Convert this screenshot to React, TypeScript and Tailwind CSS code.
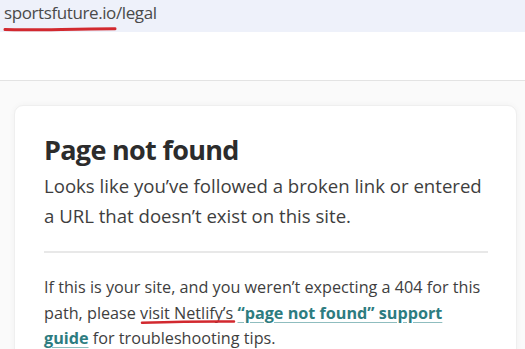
import React from "react";

export default function App() {
  const font = { fontFamily: '"Open Sans", "Noto Sans", sans-serif' };
  return (
    <div className="w-[525px] h-[349px] overflow-hidden bg-[#fafafa]" style={font}>
      <div className="h-[32px] bg-[#eef1fa] relative">
        <div className="pl-[4px] pt-[1px] text-[17px] leading-[24px] text-[#4a4a4a] tracking-[-0.4px]">
          sportsfuture.io/legal
        </div>
        <svg className="absolute left-[3px] top-[26px]" width="114" height="6" viewBox="0 0 114 6">
          <path d="M2 3.5 C 30 4.5, 60 3, 112 2.8" stroke="#d2292f" strokeWidth="3" fill="none" strokeLinecap="round" />
        </svg>
      </div>
      <div className="h-[49px] bg-white border-b border-[#e3e3e3]" />
      <div className="pl-[14px] pt-[24px]">
        <div className="w-[503px] h-[300px] bg-white rounded-[9px] border border-[#efefef] shadow-[0_0_6px_rgba(0,0,0,0.04)] pl-[29px] pr-[28px] pt-[26px]">
          <h1 className="text-[27px] leading-[36px] font-bold text-[#2c2c2c] tracking-[-0.7px]">Page not found</h1>
          <p className="mt-[3px] text-[18.6px] leading-[30px] text-[#3e3e3e]">
            Looks like you’ve followed a broken link or entered a URL that doesn’t exist on this site.
          </p>
          <div className="mt-[20px] h-[2px] bg-[#e8e8e8]" />
          <p className="mt-[22px] text-[16.2px] leading-[25.5px] text-[#3e3e3e]">
            If this is your site, and you weren’t expecting a 404 for this path, please{" "}
            <span className="relative">
              visit Netlify’s
              <svg className="absolute left-[0px] top-[17px]" width="96" height="6" viewBox="0 0 96 6">
                <path d="M2 3.8 C 30 3, 60 2.2, 94 2.6" stroke="#d2292f" strokeWidth="2.5" fill="none" strokeLinecap="round" />
              </svg>
            </span>{" "}
            <a className="font-bold text-[#2d7c80] underline decoration-[#8fbdbf] underline-offset-[3px]" href="#">
              “page not found” support guide
            </a>{" "}
            for troubleshooting tips.
          </p>
        </div>
      </div>
    </div>
  );
}
